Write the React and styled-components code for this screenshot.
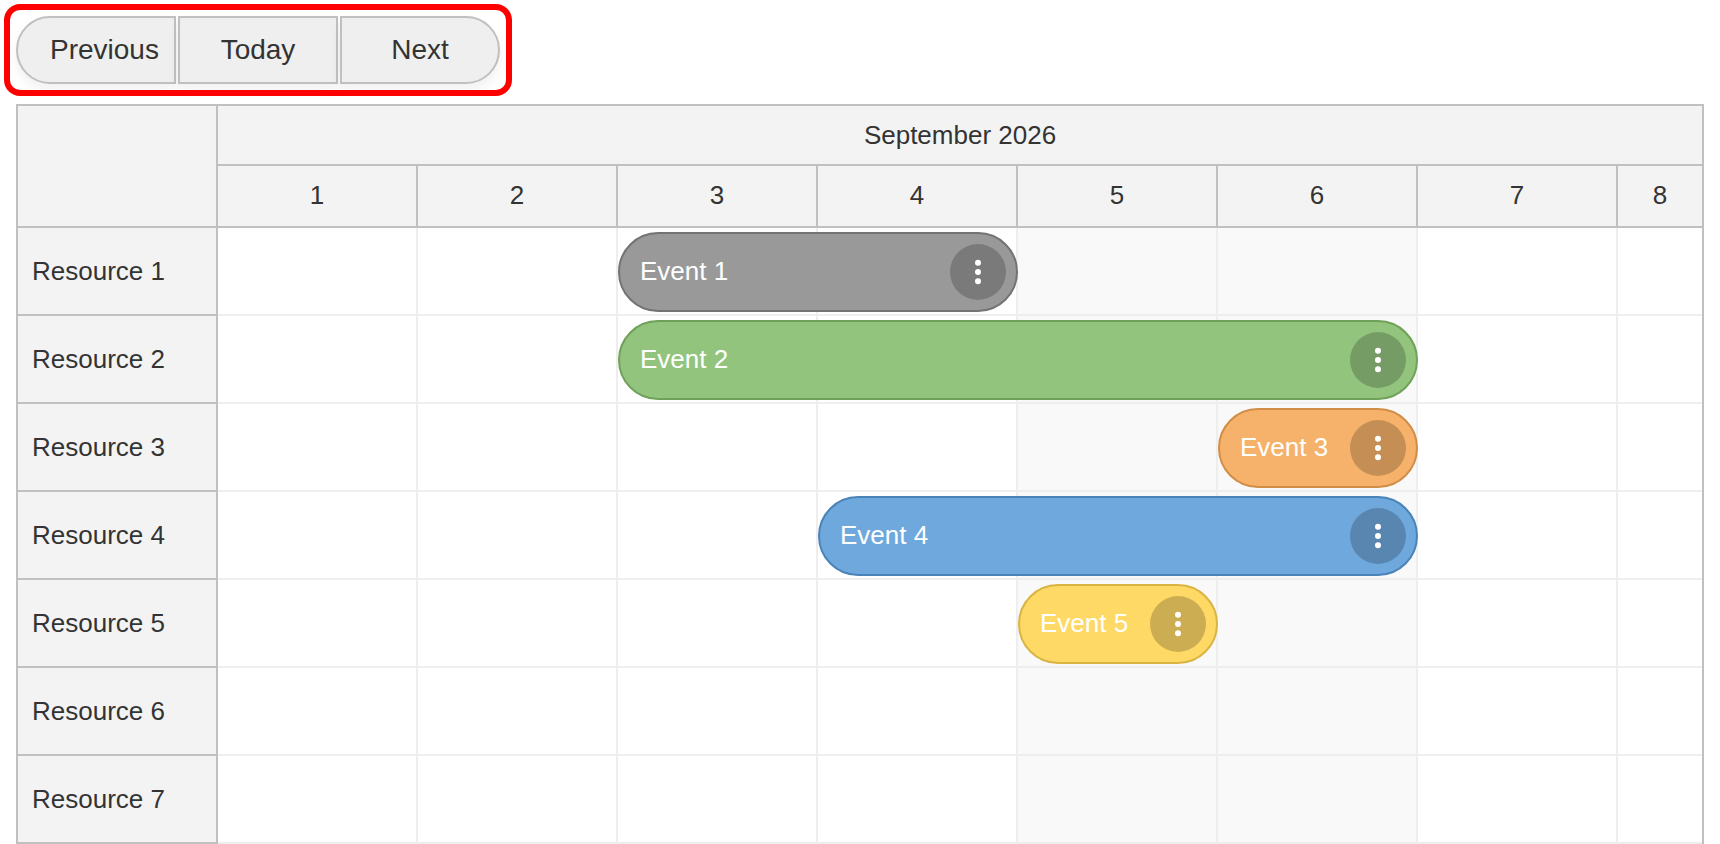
import React from "react";
import styled, { createGlobalStyle } from "styled-components";

const GlobalStyle = createGlobalStyle`
    body {
        margin: 0;
        background: #ffffff;
        color: #333333;
        font-family: "Liberation Sans", Arial, sans-serif;
        font-size: 26px;
    }
`

const Page = styled.main`
    display: flex;
    flex-direction: column;
    align-items: flex-start;
    gap: 20px;
    padding: 16px 16px 0;
`

const Toolbar = styled.div`
    position: relative;
    display: flex;
    gap: 2px;

    &::after {
        content: "";
        position: absolute;
        inset: -12px;
        border: 6px solid #ff0000;
        border-radius: 16px;
        pointer-events: none;
    }
`

const NavButton = styled.button`
    box-sizing: border-box;
    width: 160px;
    height: 68px;
    padding: 0 16px 0 32px;
    border: 2px solid #c0c0c0;
    background: #efefef;
    box-shadow: 0 6px 12px rgba(0, 0, 0, 0.06);
    color: #333333;
    font-family: inherit;
    font-size: 28px;
    white-space: nowrap;
    cursor: pointer;

    &:first-child {
        border-radius: 34px 0 0 34px;
    }

    &:not(:first-child) {
        padding: 0 32px;
    }

    &:last-child {
        border-radius: 0 34px 34px 0;
    }
`

const Table = styled.table`
    width: 100%;
    table-layout: fixed;
    border: 2px solid #c0c0c0;
    border-bottom: none;
    border-spacing: 0;
`

const Col = styled.col`
    width: ${({ $last }) => ($last ? 'auto' : '200px')};
`

const HeaderCell = styled.th`
    box-sizing: border-box;
    height: ${({ $height }) => $height}px;
    padding: 0;
    border-right: ${({ $last }) => ($last ? 'none' : '2px solid #c0c0c0')};
    border-bottom: 2px solid #c0c0c0;
    background: #f3f3f3;
    font-weight: normal;
    line-height: 30px;
    text-align: center;
`

const DayCell = styled(HeaderCell)`
    padding-bottom: 2px;
`

const ResourceCell = styled(HeaderCell)`
    padding-left: 14px;
    text-align: left;
`

const Corner = styled.td`
    padding: 0;
    border-right: 2px solid #c0c0c0;
    border-bottom: 2px solid #c0c0c0;
    background: #f3f3f3;
`

const Cell = styled.td`
    position: relative;
    padding: 0;
    border-right: ${({ $last }) => ($last ? 'none' : '2px solid #eeeeee')};
    border-bottom: 2px solid #eeeeee;
    background: ${({ $weekend }) => ($weekend ? '#f9f9f9' : '#ffffff')};
`

const Event = styled.div`
    position: absolute;
    top: 4px;
    left: 0;
    z-index: 1;
    box-sizing: border-box;
    width: ${({ $days }) => $days * 200}px;
    height: 80px;
    padding: 0 10px 0 20px;
    display: flex;
    align-items: center;
    justify-content: space-between;
    border: 2px solid ${({ $border }) => $border};
    border-radius: 40px;
    background: ${({ $color }) => $color};
    color: #ffffff;
    line-height: 30px;
    white-space: nowrap;
`

const EventText = styled.span`
    padding-bottom: 2px;
`

const MenuButton = styled.button`
    width: 56px;
    height: 56px;
    padding: 0;
    border: none;
    border-radius: 50%;
    background: rgba(0, 0, 0, 0.2);
    cursor: pointer;

    svg {
        display: block;
    }
`

const days = [1, 2, 3, 4, 5, 6, 7, 8];
const weekend = [5, 6];

const resources = [
    { name: "Resource 1", event: { text: "Event 1", start: 3, days: 2, color: "#999999", border: "#737373" } },
    { name: "Resource 2", event: { text: "Event 2", start: 3, days: 4, color: "#93c47d", border: "#6fa158" } },
    { name: "Resource 3", event: { text: "Event 3", start: 6, days: 1, color: "#f6b26b", border: "#d18d46" } },
    { name: "Resource 4", event: { text: "Event 4", start: 4, days: 3, color: "#6fa8dc", border: "#4983b8" } },
    { name: "Resource 5", event: { text: "Event 5", start: 5, days: 1, color: "#ffd966", border: "#dab440" } },
    { name: "Resource 6" },
    { name: "Resource 7" },
];

function EventBox({ event }) {
    return (
        <Event $days={event.days} $color={event.color} $border={event.border}>
            <EventText>{event.text}</EventText>
            <MenuButton type="button" aria-label={`${event.text} menu`}>
                <svg width="56" height="56" viewBox="0 0 56 56" fill="#ffffff">
                    <circle cx="28" cy="18.7" r="3" />
                    <circle cx="28" cy="28" r="3" />
                    <circle cx="28" cy="37.3" r="3" />
                </svg>
            </MenuButton>
        </Event>
    )
}

export default function App() {
    return (
        <Page>
            <GlobalStyle />

            <Toolbar>
                <NavButton type="button">Previous</NavButton>
                <NavButton type="button">Today</NavButton>
                <NavButton type="button">Next</NavButton>
            </Toolbar>

            <Table>
                <colgroup>
                    <Col />
                    {days.map((day) => <Col key={day} $last={day === 8} />)}
                </colgroup>
                <thead>
                    <tr>
                        <Corner rowSpan={2} />
                        <HeaderCell colSpan={days.length} $height={60} $last>September 2026</HeaderCell>
                    </tr>
                    <tr>
                        {days.map((day) => (
                            <DayCell key={day} scope="col" $height={62} $last={day === 8}>{day}</DayCell>
                        ))}
                    </tr>
                </thead>
                <tbody>
                    {resources.map(({ name, event }) => (
                        <tr key={name}>
                            <ResourceCell scope="row" $height={88}>{name}</ResourceCell>
                            {days.map((day) => (
                                <Cell key={day} $weekend={weekend.includes(day)} $last={day === 8}>
                                    {event && event.start === day && <EventBox event={event} />}
                                </Cell>
                            ))}
                        </tr>
                    ))}
                </tbody>
            </Table>
        </Page>
    )
}
